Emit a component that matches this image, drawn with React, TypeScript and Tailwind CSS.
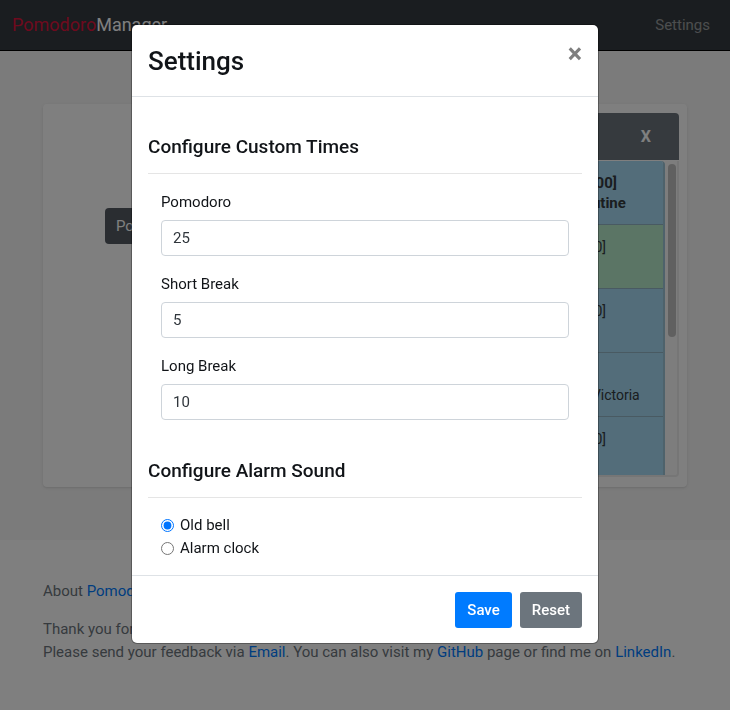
import { useState } from "react";

const times = [
  { id: "pomodoro", label: "Pomodoro", value: "25" },
  { id: "short-break", label: "Short Break", value: "5" },
  { id: "long-break", label: "Long Break", value: "10" },
];

const sounds = [
  { id: "old-bell", label: "Old bell" },
  { id: "alarm-clock", label: "Alarm clock" },
];

const tasks = [
  { time: "[08:00 - 09:00]", name: "Morning routine", tone: "bg-[#a6dbf4] text-[15px] font-bold" },
  { time: "[09:00 - 10:00]", name: "Reading", tone: "bg-[#b6ebcb] text-[14px]" },
  { time: "[10:00 - 11:30]", name: "Project", tone: "bg-[#a6dbf4] text-[14px]" },
  { time: "[11:30]", name: "Meeting w/ Victoria", tone: "bg-[#a6dbf4] text-[14px]" },
  { time: "[12:15 - 13:00]", name: "Lunch", tone: "bg-[#a6dbf4] text-[14px]" },
];

function Navbar() {
  return (
    <nav className="flex h-[51px] items-center justify-between border-b border-black bg-[#343a40] pr-5 pl-3">
      <a href="#home" className="text-lg text-white">
        <span className="text-[#dc143c]">Pomodoro</span>Manager
      </a>
      <a href="#settings" className="text-[15px] text-white/50">
        Settings
      </a>
    </nav>
  );
}

function Schedule() {
  return (
    <section className="flex w-[200px] flex-col gap-px pt-px">
      <header className="flex h-[47px] items-center justify-end rounded-t bg-[#6c757d] pr-7">
        <button type="button" className="text-base font-bold text-white">
          X
        </button>
      </header>
      <div className="flex h-[316px] overflow-hidden rounded-b border-r-2 border-b-2 border-[#ececec] bg-white">
        <ul className="min-w-0 flex-1 overflow-hidden rounded-tr border-r-2 border-[#9cc4d6]">
          {tasks.map((task) => (
            <li
              key={task.name}
              className={`h-16 border-b border-[#93b4c4] py-3 pl-[39px] leading-5 text-[#343a40] ${task.tone}`}
            >
              <p className="whitespace-nowrap">{task.time}</p>
              <p className="whitespace-nowrap">{task.name}</p>
            </li>
          ))}
        </ul>
        <div className="w-3 shrink-0 bg-[#fafafa] pt-[3px] pr-px pl-[3px]">
          <div className="h-[173px] rounded-full bg-[#c1c1c1]" />
        </div>
      </div>
    </section>
  );
}

function SettingsDialog() {
  const [sound, setSound] = useState("old-bell");
  return (
    <div className="fixed inset-0 overflow-hidden bg-black/50 px-4 py-[25px]">
      <form
        role="dialog"
        aria-labelledby="dialog-title"
        className="mx-auto max-w-[466px] rounded-[5px] bg-white text-[#111418] ring-1 ring-black/30"
      >
        <header className="flex items-start justify-between border-b border-[#dee2e6] px-4 pt-4 pb-[15px]">
          <h2 id="dialog-title" className="text-[26px] leading-10 font-medium">
            Settings
          </h2>
          <button type="button" aria-label="Close" className="text-[27px] leading-[26px] font-bold text-[#7f7f7f]">
            ×
          </button>
        </header>
        <div className="px-4 pt-[38px] pb-[15px]">
          <h3 className="border-b border-[#e5e5e5] pb-[14px] text-[19px] leading-6 font-medium">
            Configure Custom Times
          </h3>
          <div className="px-[13px] pt-4">
            {times.map((item) => (
              <div key={item.id} className="mb-4">
                <label htmlFor={item.id} className="mb-[6px] block text-[15px] leading-6">
                  {item.label}
                </label>
                <input
                  id={item.id}
                  defaultValue={item.value}
                  className="block h-9 w-full rounded border border-[#ced4da] px-[11px] text-[15px] text-[#30363c]"
                />
              </div>
            ))}
          </div>
          <h3 className="mt-[39px] border-b border-[#e5e5e5] pb-[14px] text-[19px] leading-6 font-medium">
            Configure Alarm Sound
          </h3>
          <div className="px-[13px] pt-4">
            {sounds.map((item) => (
              <div key={item.id} className="flex items-center gap-[6px]">
                <input
                  id={item.id}
                  type="radio"
                  name="sound"
                  checked={sound === item.id}
                  onChange={() => setSound(item.id)}
                />
                <label htmlFor={item.id} className="text-[15px] leading-[23px]">
                  {item.label}
                </label>
              </div>
            ))}
          </div>
        </div>
        <footer className="flex justify-end gap-2 border-t border-[#dee2e6] px-4 pt-4 pb-[15px]">
          <button type="submit" className="h-9 rounded-[3px] bg-[#007bff] px-3 text-[15px] font-medium text-white">
            Save
          </button>
          <button type="reset" className="h-9 rounded-[3px] bg-[#6c757d] px-3 text-[15px] font-medium text-white">
            Reset
          </button>
        </footer>
      </form>
    </div>
  );
}

function FooterLink({ children }: { children: string }) {
  return (
    <a href="#link" className="text-[#007bff]">
      {children}
    </a>
  );
}

export default function App() {
  return (
    <div className="min-h-screen bg-white font-['Roboto',sans-serif]">
      <Navbar />
      <main className="bg-[#f6f6f6] px-[43px] py-[53px]">
        <div className="flex min-h-[383px] items-start justify-between rounded bg-white p-2 shadow-sm">
          <div className="pt-24 pl-[54px]">
            <button type="button" className="h-9 rounded bg-[#545b62] px-[11px] text-[15px] text-white">
              Pomodoro
            </button>
          </div>
          <Schedule />
        </div>
      </main>
      <footer className="px-[43px] py-10 text-[15px] leading-[23px] text-[#6c757d]">
        <p className="mb-[15px]">
          About <FooterLink>PomodoroManager</FooterLink>
        </p>
        <p>Thank you for using this app.</p>
        <p>
          Please send your feedback via <FooterLink>Email</FooterLink>. You can also visit my{" "}
          <FooterLink>GitHub</FooterLink> page or find me on <FooterLink>LinkedIn</FooterLink>.
        </p>
      </footer>
      <SettingsDialog />
    </div>
  );
}
